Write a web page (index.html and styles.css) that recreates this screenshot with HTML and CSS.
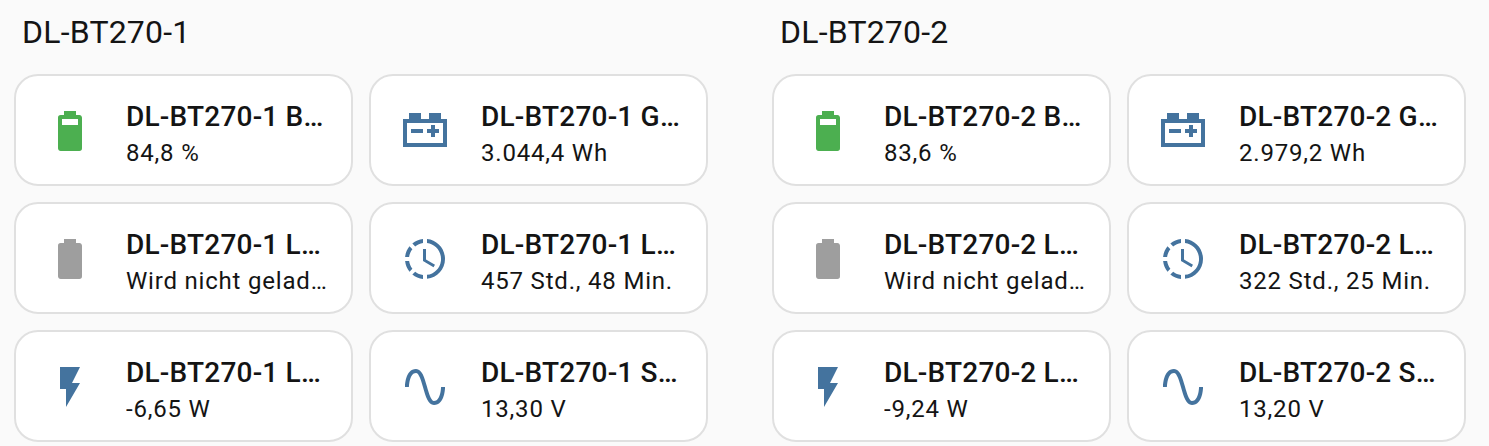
FILE: index.html
```html
<!DOCTYPE html>
<html lang="de">
<head>
<meta charset="utf-8">
<title>DL-BT270</title>
<link rel="stylesheet" href="styles.css">
</head>
<body>
<svg class="defs" aria-hidden="true">
  <symbol id="i-bat90" viewBox="0 0 24 24"><path fill-rule="evenodd" d="M16,9H8V6H16M16.67,4H15V2H9V4H7.33A1.33,1.33 0 0,0 6,5.33V20.67C6,21.4 6.6,22 7.33,22H16.67A1.33,1.33 0 0,0 18,20.67V5.33C18,4.6 17.4,4 16.67,4Z"/></symbol>
  <symbol id="i-bat" viewBox="0 0 24 24"><path d="M16.67,4H15V2H9V4H7.33A1.33,1.33 0 0,0 6,5.33V20.67C6,21.4 6.6,22 7.33,22H16.67A1.33,1.33 0 0,0 18,20.67V5.33C18,4.6 17.4,4 16.67,4Z"/></symbol>
  <symbol id="i-car" viewBox="0 0 24 24"><path d="M4,3V6H1V20H23V6H20V3H14V6H10V3H4M3,8H21V18H3V8M15,9V11H13V13H15V15H17V13H19V11H17V9H15M5,11V13H11V11H5Z"/></symbol>
  <symbol id="i-clock" viewBox="0 0 24 24"><path d="M13,2.03V2.05L13,4.05C17.39,4.59 20.5,8.58 19.96,12.97C19.5,16.61 16.64,19.5 13,19.93V21.93C18.5,21.38 22.5,16.5 21.95,11C21.5,6.25 17.73,2.5 13,2.03M11,2.06C9.05,2.25 7.19,3 5.67,4.26L7.1,5.74C8.22,4.84 9.57,4.26 11,4.06V2.06M4.26,5.67C3,7.19 2.25,9.04 2.05,11H4.05C4.24,9.58 4.8,8.23 5.69,7.1L4.26,5.67M2.06,13C2.26,14.96 3.03,16.81 4.27,18.33L5.69,16.9C4.81,15.77 4.24,14.42 4.06,13H2.06M7.1,18.37L5.67,19.74C7.18,21 9.04,21.79 11,22V20C9.58,19.82 8.23,19.25 7.1,18.37M12.5,7V12.25L17,14.92L16.25,16.15L11,13V7H12.5Z"/></symbol>
  <symbol id="i-flash" viewBox="0 0 24 24"><path d="M7,2V13H10V22L17,10H13L17,2H7Z"/></symbol>
  <symbol id="i-sine" viewBox="0 0 24 24"><path d="M16.5,21C13.5,21 12.31,16.76 11.05,12.28C10.14,9.04 9,5 7.5,5C4.11,5 4,11.93 4,12H2C2,11.63 2.06,3 7.5,3C10.5,3 11.71,7.25 12.97,11.74C13.83,14.8 15,19 16.5,19C19.94,19 20.03,12.07 20.03,12H22.03C22.03,12.37 21.97,21 16.5,21Z"/></symbol>
</svg>
<main class="page">
  <section class="device">
    <h2 class="device-title">DL-BT270-1</h2>
    <div class="tiles">
      <div class="tile"><svg class="icon green"><use href="#i-bat90"/></svg><div class="info"><div class="name">DL-BT270-1 Batterieladung</div><div class="state">84,8 %</div></div></div>
      <div class="tile"><svg class="icon blue"><use href="#i-car"/></svg><div class="info"><div class="name">DL-BT270-1 Gespeicherte Energie</div><div class="state">3.044,4 Wh</div></div></div>
      <div class="tile"><svg class="icon grey"><use href="#i-bat"/></svg><div class="info"><div class="name">DL-BT270-1 Ladestatus</div><div class="state">Wird nicht geladen</div></div></div>
      <div class="tile"><svg class="icon blue"><use href="#i-clock"/></svg><div class="info"><div class="name">DL-BT270-1 Laufzeit</div><div class="state">457 Std., 48 Min.</div></div></div>
      <div class="tile"><svg class="icon blue"><use href="#i-flash"/></svg><div class="info"><div class="name">DL-BT270-1 Leistung</div><div class="state">-6,65 W</div></div></div>
      <div class="tile"><svg class="icon blue"><use href="#i-sine"/></svg><div class="info"><div class="name">DL-BT270-1 Spannung</div><div class="state">13,30 V</div></div></div>
    </div>
  </section>
  <section class="device">
    <h2 class="device-title">DL-BT270-2</h2>
    <div class="tiles">
      <div class="tile"><svg class="icon green"><use href="#i-bat90"/></svg><div class="info"><div class="name">DL-BT270-2 Batterieladung</div><div class="state">83,6 %</div></div></div>
      <div class="tile"><svg class="icon blue"><use href="#i-car"/></svg><div class="info"><div class="name">DL-BT270-2 Gespeicherte Energie</div><div class="state">2.979,2 Wh</div></div></div>
      <div class="tile"><svg class="icon grey"><use href="#i-bat"/></svg><div class="info"><div class="name">DL-BT270-2 Ladestatus</div><div class="state">Wird nicht geladen</div></div></div>
      <div class="tile"><svg class="icon blue"><use href="#i-clock"/></svg><div class="info"><div class="name">DL-BT270-2 Laufzeit</div><div class="state">322 Std., 25 Min.</div></div></div>
      <div class="tile"><svg class="icon blue"><use href="#i-flash"/></svg><div class="info"><div class="name">DL-BT270-2 Leistung</div><div class="state">-9,24 W</div></div></div>
      <div class="tile"><svg class="icon blue"><use href="#i-sine"/></svg><div class="info"><div class="name">DL-BT270-2 Spannung</div><div class="state">13,20 V</div></div></div>
    </div>
  </section>
</main>
</body>
</html>
```
FILE: styles.css
```css
html, body {
  margin: 0;
  height: 100%;
  overflow: hidden;
  background: #fafafa;
}
body {
  font-family: Roboto, "Liberation Sans", sans-serif;
  color: #141414;
}
.defs {
  display: none;
}
.page {
  display: flex;
  gap: 64px;
  padding: 0 0 0 14px;
}
.device {
  width: 694px;
  flex: none;
}
.device-title {
  margin: 0;
  padding: 12px 0 0 8px;
  height: 74px;
  box-sizing: border-box;
  font-size: 32px;
  line-height: 40px;
  font-weight: 400;
  letter-spacing: 0.2px;
}
.tiles {
  display: grid;
  grid-template-columns: 339px 339px;
  gap: 16px;
}
.tile {
  box-sizing: border-box;
  height: 112px;
  display: flex;
  align-items: center;
  gap: 32px;
  padding: 2px 22px 0 30px;
  background: #fff;
  border: 2px solid #e0e0e0;
  border-radius: 24px;
}
.icon {
  width: 48px;
  height: 48px;
  flex: none;
}
.green { fill: #4caf50; }
.blue { fill: #44739e; }
.grey { fill: #9e9e9e; }
.info {
  min-width: 0;
  flex: 1;
  padding-top: 4px;
}
.name, .state {
  white-space: nowrap;
  overflow: hidden;
  text-overflow: ellipsis;
}
.name {
  font-size: 28px;
  line-height: 40px;
  font-weight: 500;
  letter-spacing: 0.2px;
}
.state {
  font-size: 24px;
  line-height: 32px;
  font-weight: 400;
  letter-spacing: 0.8px;
}
```
